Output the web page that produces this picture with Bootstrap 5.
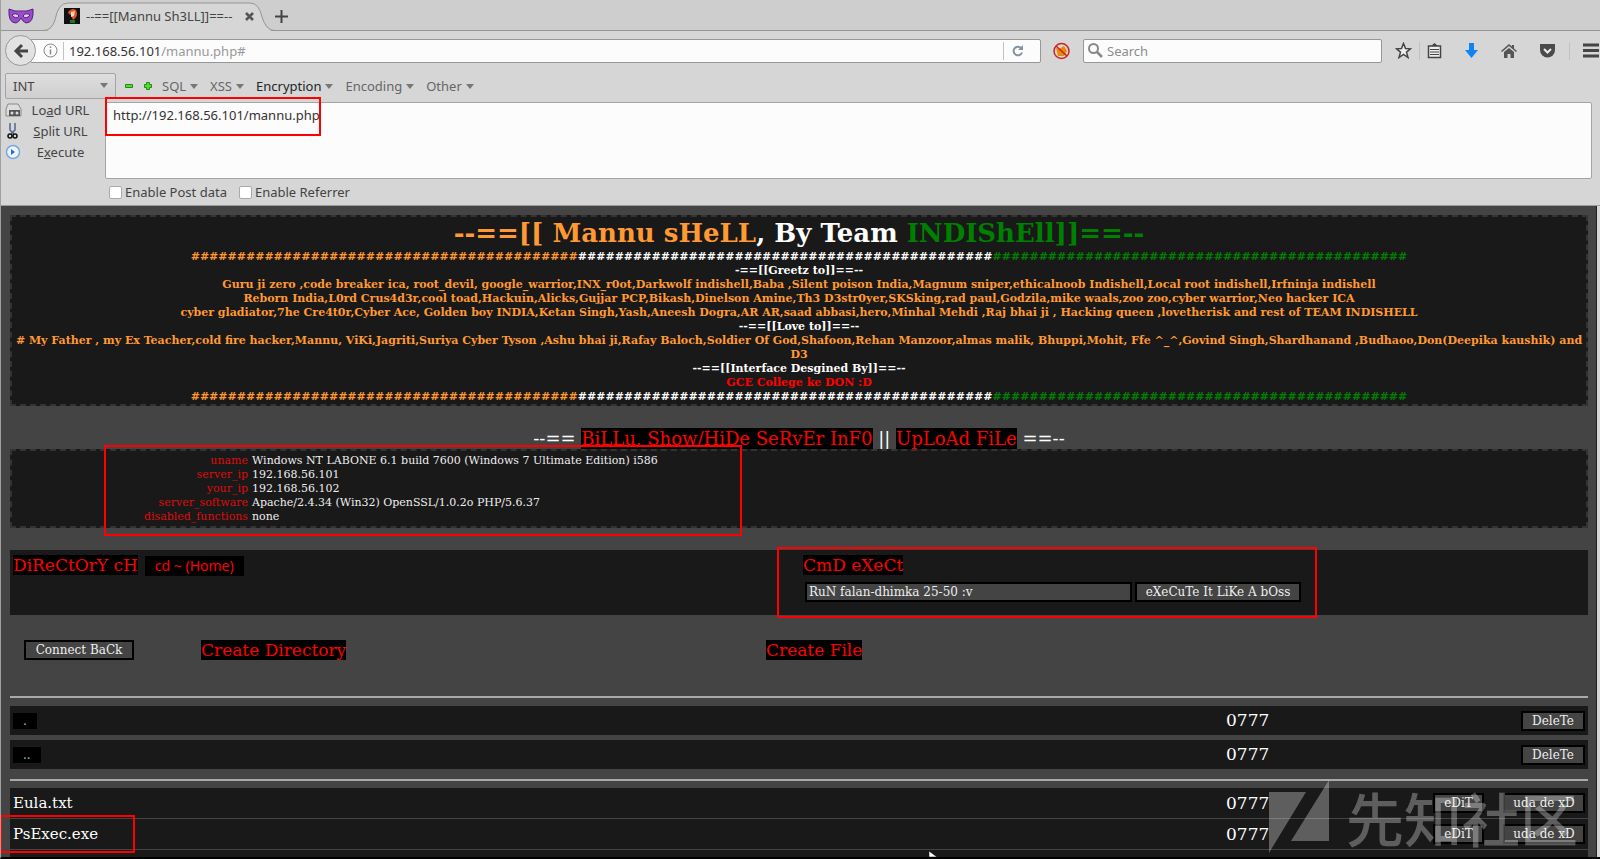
<!DOCTYPE html>
<html lang="en">
<head>
<meta charset="utf-8">
<meta name="viewport" content="width=device-width, initial-scale=1">
<title>--==[[Mannu Sh3LL]]==--</title>
<link href="https://cdn.jsdelivr.net/npm/bootstrap@5.3.0/dist/css/bootstrap.min.css" rel="stylesheet">
<script src="https://cdn.jsdelivr.net/npm/bootstrap@5.3.0/dist/js/bootstrap.bundle.min.js"></script>
<style>
  html, body { height: 100%; overflow: hidden; }
  body { background: #d6d6d6; color: #444; font: 13px/18px "Noto Sans", sans-serif; }
  button, input, select, textarea { font: inherit; color: inherit; }
  svg { display: block; flex: none; }

  /* browser window */
  .window { height: 100vh; border-left: 1px solid #a0a0a0; border-bottom: 2px solid #000; }
  .tabstrip { height: 31px; background: #cecece; border-bottom: 1px solid #959595; }
  .mask-icon { left: 7px; top: 7px; }
  .tab-shape { left: 43px; top: 2px; }
  .tab-title { left: 62px; top: 6px; height: 20px; }
  .tab-title span { margin: 0 12px 0 5px; }
  .plain-btn { background: none; border: 0; padding: 0; line-height: 1; }
  .new-tab { margin-left: 20px; }
  .navbar-row { height: 39px; padding-left: 4px; }
  .back-btn { width: 31px; height: 31px; border-radius: 50%; border: 1px solid #999; background: #e2e2e2; z-index: 1; }
  .urlbar, .searchbar { height: 24px; background: #fcfcfc; border: 1px solid #979797; border-radius: 2px; }
  .urlbar { margin-left: -6px; padding-left: 12px; }
  .searchbar input { border: 0; background: none; outline: 0; padding: 0; min-width: 0; }
  .urlbar .host { color: #333; }
  .urlbar .path { color: #999; text-decoration: none; }
  .vsep { width: 1px; height: 18px; background: #c2c2c2; }
  .vsep-tight { margin: 0 5px; }
  .noscript { margin: 0 13px 0 12px; }
  .searchbar { width: 299px; }
  .searchbar input::placeholder { color: #8d8d8d; opacity: 1; }

  /* query toolbar */
  .hack { height: 136px; border-bottom: 1px solid #9b9b9b; padding: 3px 0 0 4px; }
  .kind { width: 111px; height: 26px; border: 1px solid #a4a4a4; border-radius: 2px; padding: 0 7px; appearance: none;
    background: linear-gradient(#dedede, #cfcfcf); }
  .caret::after { content: ""; display: inline-block; margin-left: 4px; vertical-align: 2px;
    border: 4px solid transparent; border-top: 5px solid #777; border-bottom: 0; }
  .kind-wrap::after { position: absolute; right: 8px; top: 10px; }
  .menu-list { gap: 12px; color: #666; }
  .query-row { padding: 3px 8px 0 0; }
  .side-list { width: 100px; margin-top: -3px; }
  .side-list button { height: 21px; }
  .side-list span { flex: 1; text-align: center; padding-right: 6px; line-height: 18px; }
  .query { height: 77px; border: 1px solid #a4a4a4; border-radius: 2px; background: #fcfcfc; padding: 3px 7px; resize: none; color: #333; }
  .ticks { margin: 4px 0 0 104px; gap: 12px; }
  .tick { appearance: none; width: 13px; height: 13px; background: #fff; border: 1px solid #aaa; border-radius: 2px; margin: 0 3px 0 0; }

  /* page */
  .page { background: #444; color: #fff; margin-right: 3px; border-right: 1px solid #222; padding: 9px 8px 0 9px;
    font: 17px/21px "DejaVu Serif", serif; }
  .panel { background: #191919; }
  .dashed { border: 2px dashed #333; }
  .tiny { font-size: 11px; line-height: 14px; }
  .saffron { color: #ff9933; }
  .india-green { color: green; }
  .red { color: red; }
  .hot { color: red; background: #000; text-decoration: none; }
  .hot:hover { color: red; }
  .headline { font-size: 26px; line-height: 33px; font-weight: 700; margin: 0; }
  .links { font-size: 18px; padding-top: 22px; }
  .info-panel { padding: 3px 0 2px; }
  .info th { font-weight: 400; color: #dc0c0c; text-align: right; width: 236px; padding: 0; }
  .info td { padding: 0 0 0 4px; color: #eee; }
  .command-panel { margin-top: 22px; min-height: 65px; padding: 5px 3px; }
  .command-line { gap: 3px; padding: 6px 2px 0; }
  .dark-btn, .dark-input { border: 2px solid #000; background: #444; color: #eee; font-size: 12px; line-height: 14px; height: 20px; padding: 0; border-radius: 0; }
  .dark-input { width: 327px; padding: 0 2px; }
  .home-btn { font: 14px/20px "Noto Sans", sans-serif; background: #000; color: red; border: 0; padding: 0 10px; margin-left: 7px; }
  .actions { padding: 25px 14px 35px; }
  .create-dir { margin-left: 67px; width: 565px; }
  .rule { margin: 0; border: 0; opacity: 1; height: 2px; background: #aaa; }
  .dot-btn { background: #000; color: #8cc; border: 0; font-size: 12px; line-height: 16px; height: 16px; padding: 0 10px; }
  .folder { height: 29px; padding: 0 3px; }
  .file { height: 30px; padding: 0 3px; margin-bottom: 1px; }
  .file > b { font-size: 15px; font-weight: 400; }
  .perm { width: 359px; }
  .w-del { width: 64px; } .w-uda { width: 82px; } .w-edit { width: 51px; margin-right: 19px; }
  .w-exec { width: 166px; } .w-connect { width: 110px; }

  /* callouts and overlay */
  .callout { position: absolute; border: 2px solid red; pointer-events: none; }
  .c-url { left: 0; top: -5px; width: 216px; height: 39px; }
  .c-info { left: 92px; top: -6px; width: 638px; height: 91px; }
  .c-cmd { left: 767px; top: -3px; width: 540px; height: 71px; }
  .c-file { left: -10px; top: -4px; width: 135px; height: 38px; }
  .watermark { right: 22px; bottom: 2px; color: rgba(255,255,255,.3); font: 500 58px/76px "Noto Sans CJK SC", sans-serif; pointer-events: none; }
  .watermark svg { margin-right: 17px; }
  .pointer { left: 928px; bottom: 0; }
</style>
</head>
<body>
<div class="window d-flex flex-column position-relative overflow-hidden">

  <header>
    <div class="tabstrip position-relative">
      <svg class="mask-icon position-absolute" width="26" height="18" viewBox="0 0 26 18"><path d="M1 2Q7 5 13 4Q19 5 25 2Q26 16 18 16Q15 15 13 11Q11 15 8 16Q0 16 1 2Z" fill="#9a4ccb" stroke="#54207a"/><path d="M4 8Q8 5 11 9Q8 13 4 8M22 8Q18 5 15 9Q18 13 22 8" fill="#d8d0dc" stroke="#54207a"/></svg>
      <svg class="tab-shape position-absolute" width="230" height="30" viewBox="0 0 230 30"><path d="M0 29Q8 29 11 19Q14 1 24 1H206Q215 1 218 15Q222 29 230 29V30H0Z" fill="#d6d6d6"/><path d="M0 28.500Q8 28 11 18Q14 1 24 1H206Q215 1 218 15Q222 28 230 28.500" fill="none" stroke="#959595"/></svg>
      <div class="tab-title position-absolute d-flex align-items-center">
        <svg width="18" height="18" viewBox="0 0 18 18"><path d="M1 1h16v16H1z" fill="#111"/><path d="M5 5Q9 0 13 3Q16 9 10 13Q8 10 9 7Q6 9 5 5" fill="#e8531d"/><path d="M8 5l4-1-1 5-3 1z" fill="#f3d9c8"/><path d="M7 13h5v3H7z" fill="#127a2c"/></svg>
        <span>--==[[Mannu Sh3LL]]==--</span>
        <button class="plain-btn" aria-label="Close tab"><svg width="11" height="11" viewBox="0 0 11 11"><path d="M2 2l7 7M9 2l-7 7" stroke="#555" stroke-width="2.500"/></svg></button>
        <button class="plain-btn new-tab" aria-label="New tab"><svg width="13" height="13" viewBox="0 0 13 13"><path d="M6.500 0v13M0 6.500h13" stroke="#444" stroke-width="2"/></svg></button>
      </div>
    </div>

    <div class="navbar-row d-flex align-items-center">
      <button class="back-btn plain-btn d-flex align-items-center justify-content-center flex-shrink-0" aria-label="Back"><svg width="16" height="16" viewBox="0 0 16 16"><path d="M9 2L3 8l6 6M3 8h12" fill="none" stroke="#444" stroke-width="3"/></svg></button>
      <div class="urlbar d-flex align-items-center flex-grow-1">
        <svg width="15" height="15" viewBox="0 0 15 15"><circle cx="7.500" cy="7.500" r="6.500" fill="none" stroke="#888"/><path d="M7.500 6.500v5M7.500 3.500v1.500" stroke="#888" stroke-width="1.500"/></svg>
        <span class="vsep vsep-tight"></span>
        <a class="path flex-grow-1" href="#"><span class="host">192.168.56.101</span>/mannu.php#</a>
        <span class="vsep"></span>
        <button class="plain-btn ms-2 me-3" aria-label="Reload"><svg width="12" height="12" viewBox="0 0 12 12"><path d="M10 7.500A4.300 4.300 0 1 1 9 3" fill="none" stroke="#8593a0" stroke-width="2"/><path d="M11 0v5H6z" fill="#8593a0"/></svg></button>
      </div>
      <svg class="noscript" width="17" height="18" viewBox="0 0 17 18"><path d="M3 6l3 1 5-3 3 5-3 5-6 0z" fill="#e8890c"/><circle cx="8.500" cy="9" r="7.500" fill="none" stroke="#c22" stroke-width="1.500"/><path d="M3 4l11 10" stroke="#c22" stroke-width="1.500"/></svg>
      <div class="searchbar d-flex align-items-center gap-1 ps-1">
        <svg width="15" height="15" viewBox="0 0 15 15"><circle cx="5.500" cy="5.500" r="4.500" fill="none" stroke="#888" stroke-width="2"/><path d="M9 9l5 5" stroke="#888" stroke-width="2.500"/></svg>
        <input class="flex-grow-1" type="search" placeholder="Search" aria-label="Search">
      </div>
      <div class="d-flex align-items-center" style="margin-left:13px">
        <svg width="17" height="17" viewBox="0 0 17 17"><path d="M8.500 1.500l2 5 5 .3-4 3.300 1.500 5.400-4.500-3-4.500 3 1.500-5.400-4-3.300 5-.3z" fill="#eee" stroke="#444" stroke-width="1.500"/></svg>
        <span class="vsep" style="margin:0 7px"></span>
        <svg width="15" height="17" viewBox="0 0 15 17"><path d="M1.500 4h12v11.500h-12z" fill="#eee" stroke="#444" stroke-width="1.500"/><path d="M4 4l3.500-3L11 4z" fill="#444"/><path d="M3 7.500h9M3 10h9M3 12.500h9" stroke="#444"/></svg>
        <svg style="margin:0 22px" width="15" height="17" viewBox="0 0 15 17"><path d="M5 1h5v7h4l-6.500 8L1 8h4z" fill="#0d84f5"/></svg>
        <svg width="16" height="16" viewBox="0 0 16 16"><path d="M0 8l8-7 3 2.500V2h2v3.500L16 8l-1 1-7-6-7 6z" fill="#555"/><path d="M3 9l5-4 5 4v6H9.500v-4h-3v4H3z" fill="#555"/></svg>
        <svg style="margin:0 13px 0 22px" width="17" height="16" viewBox="0 0 17 16"><path d="M1 1h15v6a7.500 7.500 0 0 1-15 0z" fill="#4a4a4a"/><path d="M5 6l3.500 3.500L12 6" fill="none" stroke="#e8e8e8" stroke-width="2"/></svg>
        <span class="vsep"></span>
        <svg style="margin-left:13px" width="17" height="16" viewBox="0 0 17 16"><path d="M0 2h16M0 7.500h16M0 13h16" stroke="#444" stroke-width="3"/></svg>
      </div>
    </div>

    <div class="hack">
      <div class="d-flex align-items-center">
        <div class="kind-wrap caret position-relative me-2">
          <select class="kind" aria-label="Type"><option>INT</option></select>
        </div>
        <svg width="30" height="10" viewBox="0 0 30 10"><path d="M1.500 3.500h7v3h-7z" fill="#5d2" stroke="#282"/><path d="M22.500 1.500h3v2h2v3h-2v2h-3v-2h-2v-3h2z" fill="#5d2" stroke="#282"/></svg>
        <div class="menu-list d-flex ms-2">
          <button class="plain-btn caret">SQL</button>
          <button class="plain-btn caret">XSS</button>
          <button class="plain-btn caret text-dark">Encryption</button>
          <button class="plain-btn caret">Encoding</button>
          <button class="plain-btn caret">Other</button>
        </div>
      </div>
      <div class="query-row d-flex">
        <div class="side-list d-flex flex-column flex-shrink-0">
          <button class="plain-btn d-flex align-items-center"><svg width="17" height="16" viewBox="0 0 17 16"><path d="M3 2h10l3 5v7H1V7z" fill="#ddd" stroke="#888"/><path d="M4 8h11v6H4z" fill="#555"/><circle cx="7" cy="11" r="1.500" fill="#ddd"/><circle cx="12" cy="11" r="1.500" fill="#ddd"/></svg><span>Lo<u>a</u>d URL</span></button>
          <button class="plain-btn d-flex align-items-center"><svg width="17" height="18" viewBox="0 0 17 18"><path d="M5 1v7l4 4M10 1v7l-4 4" fill="none" stroke="#568" stroke-width="1.500"/><circle cx="5" cy="14" r="2" fill="none" stroke="#111" stroke-width="1.500"/><circle cx="10" cy="14" r="2" fill="none" stroke="#111" stroke-width="1.500"/></svg><span><u>S</u>plit URL</span></button>
          <button class="plain-btn d-flex align-items-center"><svg width="17" height="16" viewBox="0 0 17 16"><circle cx="8" cy="8" r="6.500" fill="#eef5ff" stroke="#79a8e0" stroke-width="1.500"/><path d="M6 5l4 3-4 3z" fill="#246fc9"/></svg><span>E<u>x</u>ecute</span></button>
        </div>
        <div class="position-relative flex-grow-1">
          <textarea class="query d-block w-100" aria-label="URL">http://192.168.56.101/mannu.php</textarea>
          <div class="callout c-url"></div>
        </div>
      </div>
      <div class="ticks d-flex">
        <label class="d-flex align-items-center"><input class="tick" type="checkbox">Enable Post data</label>
        <label class="d-flex align-items-center"><input class="tick" type="checkbox">Enable Referrer</label>
      </div>
    </div>
  </header>

  <main class="page flex-grow-1">
    <section class="panel dashed text-center tiny fw-bold">
      <h1 class="headline"><span class="saffron">--==[[ Mannu sHeLL</span>, By Team <span class="india-green">INDIShEll]]==--</span></h1>
      <div><span class="saffron">##########################################</span>#############################################<span class="india-green">#############################################</span></div>
      <div>-==[[Greetz to]]==--</div>
      <div class="saffron">Guru ji zero ,code breaker ica, root_devil, google_warrior,INX_r0ot,Darkwolf indishell,Baba ,Silent poison India,Magnum sniper,ethicalnoob Indishell,Local root indishell,Irfninja indishell</div>
      <div class="saffron">Reborn India,L0rd Crus4d3r,cool toad,Hackuin,Alicks,Gujjar PCP,Bikash,Dinelson Amine,Th3 D3str0yer,SKSking,rad paul,Godzila,mike waals,zoo zoo,cyber warrior,Neo hacker ICA</div>
      <div class="saffron">cyber gladiator,7he Cre4t0r,Cyber Ace, Golden boy INDIA,Ketan Singh,Yash,Aneesh Dogra,AR AR,saad abbasi,hero,Minhal Mehdi ,Raj bhai ji , Hacking queen ,lovetherisk and rest of TEAM INDISHELL</div>
      <div>--==[[Love to]]==--</div>
      <div class="saffron"># My Father , my Ex Teacher,cold fire hacker,Mannu, ViKi,Jagriti,Suriya Cyber Tyson ,Ashu bhai ji,Rafay Baloch,Soldier Of God,Shafoon,Rehan Manzoor,almas malik, Bhuppi,Mohit, Ffe ^_^,Govind Singh,Shardhanand ,Budhaoo,Don(Deepika kaushik) and D3</div>
      <div>--==[[Interface Desgined By]]==--</div>
      <div class="red">GCE College ke DON :D</div>
      <div><span class="saffron">##########################################</span>#############################################<span class="india-green">#############################################</span></div>
    </section>

    <div class="links text-center">--== <a class="hot" href="#">BiLLu, Show/HiDe SeRvEr InF0</a> || <a class="hot" href="#">UpLoAd FiLe</a> ==--</div>

    <section class="panel dashed tiny position-relative info-panel">
      <table class="info">
        <tr><th scope="row">uname</th><td>Windows NT LABONE 6.1 build 7600 (Windows 7 Ultimate Edition) i586</td></tr>
        <tr><th scope="row">server_ip</th><td>192.168.56.101</td></tr>
        <tr><th scope="row">your_ip</th><td>192.168.56.102</td></tr>
        <tr><th scope="row">server_software</th><td>Apache/2.4.34 (Win32) OpenSSL/1.0.2o PHP/5.6.37</td></tr>
        <tr><th scope="row">disabled_functions</th><td>none</td></tr>
      </table>
      <div class="callout c-info"></div>
    </section>

    <section class="panel command-panel position-relative row g-0">
      <div class="col-6"><a class="hot" href="#">DiReCtOrY cH</a><button class="home-btn">cd ~ (Home)</button></div>
      <div class="col-6 ps-1">
        <a class="hot" href="#">CmD eXeCt</a>
        <div class="command-line d-flex"><input class="dark-input" type="text" value="RuN falan-dhimka 25-50 :v" aria-label="Command"><button class="dark-btn w-exec">eXeCuTe It LiKe A bOss</button></div>
      </div>
      <div class="callout c-cmd"></div>
    </section>

    <div class="actions d-flex">
      <button class="dark-btn w-connect">Connect BaCk</button>
      <div class="create-dir"><a class="hot" href="#">Create Directory</a></div>
      <div><a class="hot" href="#">Create File</a></div>
    </div>

    <hr class="rule">
    <div class="panel folder d-flex align-items-center" style="margin-top:8px"><button class="dot-btn">.</button><span class="perm ms-auto d-flex justify-content-between align-items-center">0777<button class="dark-btn w-del">DeleTe</button></span></div>
    <div class="panel folder d-flex align-items-center" style="margin:5px 0 10px"><button class="dot-btn">..</button><span class="perm ms-auto d-flex justify-content-between align-items-center">0777<button class="dark-btn w-del">DeleTe</button></span></div>
    <hr class="rule">
    <div class="panel file d-flex align-items-center" style="margin-top:7px"><b>Eula.txt</b><span class="perm ms-auto d-flex align-items-center">0777<button class="dark-btn w-edit ms-auto">eDiT</button><button class="dark-btn w-uda">uda de xD</button></span></div>
    <div class="panel file d-flex align-items-center position-relative"><b>PsExec.exe</b><span class="perm ms-auto d-flex align-items-center">0777<button class="dark-btn w-edit ms-auto">eDiT</button><button class="dark-btn w-uda">uda de xD</button></span><div class="callout c-file"></div></div>
    <div class="panel file"></div>
  </main>

  <div class="watermark position-absolute d-flex align-items-center">
    <svg width="60" height="74" viewBox="0 0 60 74"><path d="M0 12h37L0 73zM60 0v61H22z" fill="currentColor"/></svg>
    <span>先知社区</span>
  </div>
  <svg class="pointer position-absolute" width="10" height="6" viewBox="0 0 10 6"><path d="M0 0l8 6H0z" fill="#fff" stroke="#000" stroke-width=".5"/></svg>
</div>
</body>
</html>
